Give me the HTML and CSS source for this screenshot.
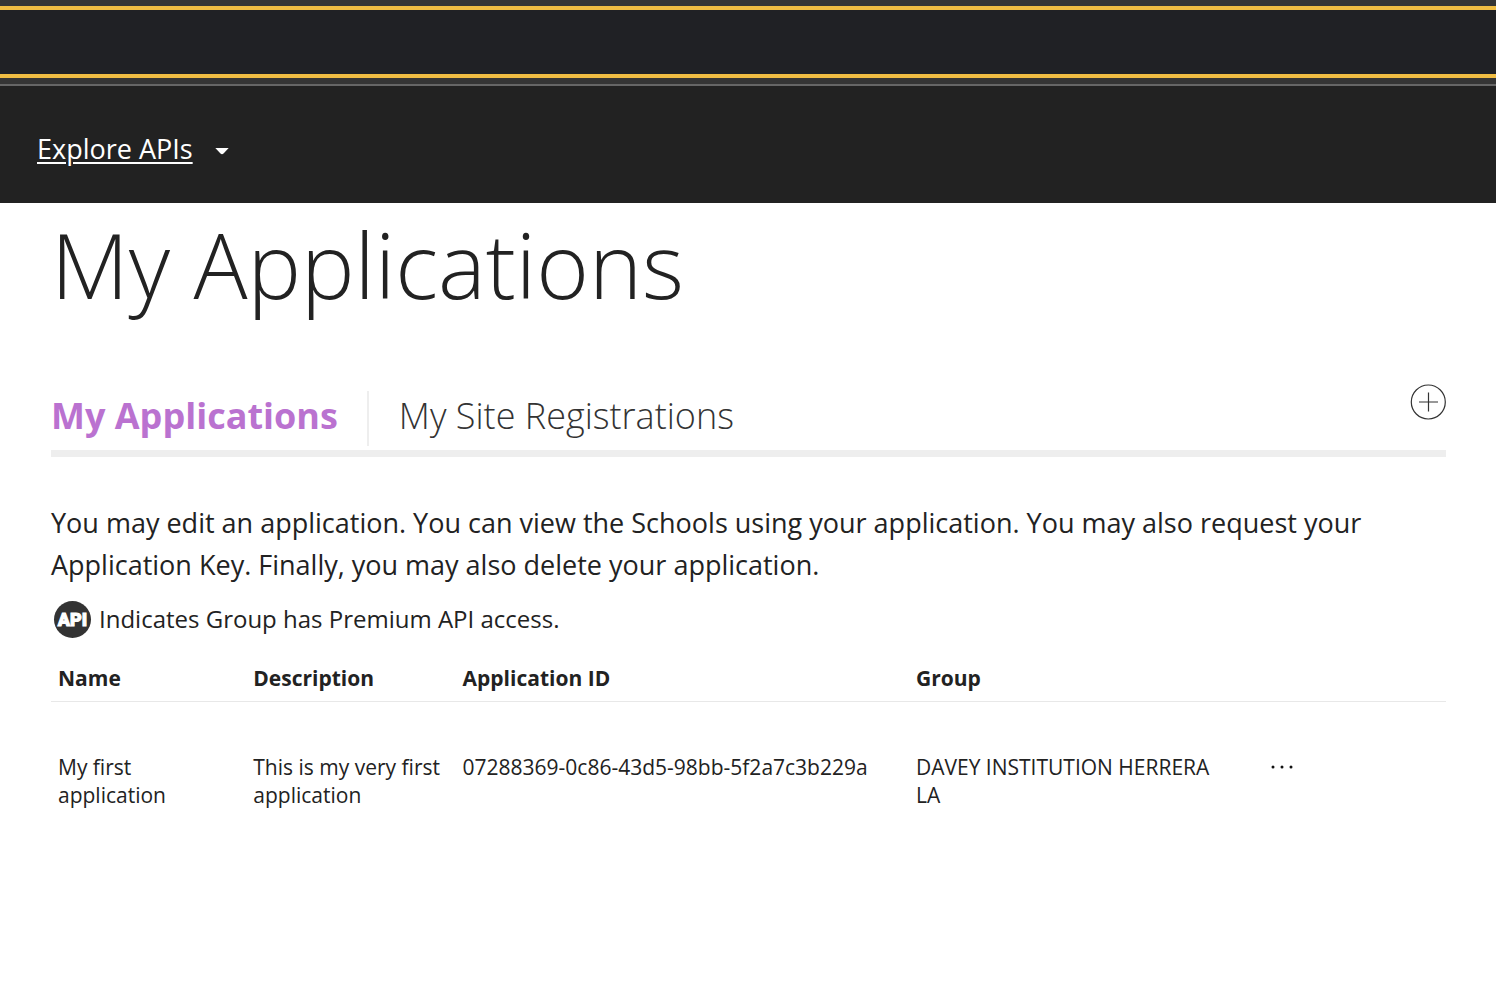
FILE: index.html
```html
<!DOCTYPE html>
<html lang="en">
<head>
<meta charset="utf-8">
<title>My Applications</title>
<link rel="stylesheet" href="styles.css">
</head>
<body>
<div class="banner"></div>
<header class="header">
<nav>
<button class="explore" type="button"><span class="explore-label">Explore APIs</span><svg class="caret" viewBox="0 0 14 8" aria-hidden="true"><path d="M0.3 1H13.7L8.5 6.5Q7 8 5.5 6.5Z" fill="currentColor"/></svg></button>
</nav>
</header>
<main class="main">
<h1 class="title">My Applications</h1>
<div class="tabbar">
<nav class="tabs">
<a class="tab tab-active" href="#applications">My Applications</a>
<a class="tab" href="#sites">My Site Registrations</a>
</nav>
<button class="add" type="button" aria-label="Add application"><svg viewBox="0 0 36 36" aria-hidden="true"><circle cx="18.3" cy="18" r="17"/><path d="M9 18H28M18.5 8.5V27.5"/></svg></button>
</div>
<p class="intro">You may edit an application. You can view the Schools using your application. You may also request your Application Key. Finally, you may also delete your application.</p>
<p class="premium"><span class="badge">API</span>Indicates Group has Premium API access.</p>
<table class="apps">
<colgroup><col class="c-name"><col class="c-desc"><col class="c-id"><col class="c-group"><col></colgroup>
<thead><tr><th>Name</th><th>Description</th><th>Application ID</th><th>Group</th><th></th></tr></thead>
<tbody><tr><td>My first application</td><td>This is my very first application</td><td>07288369-0c86-43d5-98bb-5f2a7c3b229a</td><td class="group">DAVEY INSTITUTION HERRERA LA</td><td><button class="more" type="button" aria-label="More actions"><svg viewBox="0 0 24 4" aria-hidden="true"><circle cx="3" cy="2" r="1.5"/><circle cx="12" cy="2" r="1.5"/><circle cx="21" cy="2" r="1.5"/></svg></button></td></tr></tbody>
</table>
</main>
</body>
</html>
```
FILE: styles.css
```css
*, *::before { box-sizing: border-box; }
body { margin: 0; background: #fff; color: #222; font-family: "Open Sans", sans-serif; }
button { padding: 0; border: 0; background: none; color: inherit; font: inherit; cursor: pointer; }
.banner { height: 84px; padding: 6px 0; background: #353535; }
.banner::before { content: ""; display: block; height: 72px; border: solid #f0bd43; border-width: 4px 0; background: #202125; }
.header { padding: 43px 37px 35px; border-top: 2px solid #666; background: #222; color: #fff; }
.explore { display: flex; align-items: center; gap: 22px; font-size: 27px; line-height: 39px; }
.explore-label { text-decoration: underline; text-decoration-thickness: 2px; text-underline-offset: 3px; }
.caret { width: 14px; height: 8px; margin-top: 4px; }
.main { padding: 0 50px 40px 51px; }
.title { margin: 0; font-size: 90px; line-height: 122px; font-weight: 300; }
.tabbar { display: flex; justify-content: space-between; align-items: flex-start; margin-top: 59px; border-bottom: 7px solid #eee; }
.tabs { display: flex; padding: 7px 0 4px; }
.tab { padding: 0 0 6px 30px; color: #333; font-size: 36px; line-height: 49px; font-weight: 300; text-decoration: none; }
.tab-active { padding: 0 29px 6px 0; border-right: 2px solid #eee; color: #ba72d0; font-weight: 700; }
.add { width: 36px; height: 36px; }
.add svg { display: block; fill: none; stroke: #333; stroke-width: 1.2; }
.intro { margin: 45px 0 0; font-size: 27px; line-height: 42px; }
.premium { display: flex; align-items: center; gap: 8px; margin: 14px 0 0; padding-left: 3px; font-size: 24px; line-height: 38px; }
.badge { width: 37px; height: 37px; border-radius: 50%; background: #333; color: #fff; font: 900 18px/37px Roboto, sans-serif; text-align: center; -webkit-text-stroke: 1px #fff; }
.apps { width: 100%; margin-top: 15px; border-collapse: collapse; table-layout: fixed; font-size: 21px; line-height: 28px; text-align: left; }
.c-name { width: 14%; }
.c-desc { width: 15%; }
.c-id { width: 32.5%; }
.c-group { width: 25.4%; }
.apps th { padding: 11px 7px 9px; border-bottom: 1px solid #e8e8e8; }
.apps td { padding: 51px 7px 0; vertical-align: top; }
.apps .group { padding-right: 40px; }
.more { display: block; padding: 12px 0; }
.more svg { display: block; width: 24px; height: 4px; fill: #111; }
```
